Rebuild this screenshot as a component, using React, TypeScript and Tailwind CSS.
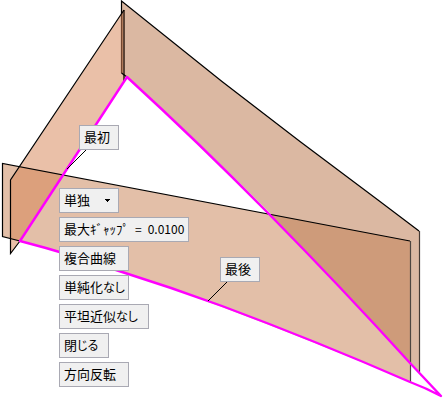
import type { ReactNode } from "react";

const FACE =
  "box-border block h-[25px] border border-[#a9a9b3] bg-[#f0f0f0] px-1 text-left text-[13px] text-black whitespace-nowrap";

const OPTIONS = ["単独", "連結", "正接連続"];

function Tag({ width, children }: { width: string; children: ReactNode }) {
  return (
    <button type="button" className={`${FACE} pb-0.5 leading-[21px] ${width}`}>
      {children}
    </button>
  );
}

function Kana({ children }: { children: ReactNode }) {
  return <span className="text-[12px] [font-feature-settings:'palt']">{children}</span>;
}

function ModeSelect() {
  return (
    <div className="relative w-[60px]">
      <select
        aria-label="曲線選択モード"
        defaultValue="単独"
        className={`${FACE} w-full appearance-none rounded-none pb-0.5 leading-[21px]`}
      >
        {OPTIONS.map((o) => (
          <option key={o}>{o}</option>
        ))}
      </select>
      <svg
        className="pointer-events-none absolute top-[11px] right-[9px]"
        width="5"
        height="3"
        viewBox="0 0 5 3"
        shapeRendering="crispEdges"
        aria-hidden="true"
      >
        <path d="M0 0h5v1h-1v1h-1v1h-1v-1h-1v-1h-1z" />
      </svg>
    </div>
  );
}

function Surfaces() {
  return (
    <svg className="block h-[401px] w-[444px]" viewBox="0 0 444 401" fill="none" aria-hidden="true">
      {/* surface fills */}
      <path
        d="M121.500 1.500L222 81.500L300 141.500L378 200L419.500 231V372Q269 204 127 77L121.500 73Z"
        fill="#dbb8a2"
      />
      <path d="M124 10L11 180V253.500L20 241L127 77L124 82Z" fill="#eac0a8" />
      <path d="M2.500 163.500L410.500 241V382Q220 303 119 271Q70 254 20 241L2.500 236.500Z" fill="#e3bfa8" />

      {/* where two surfaces overlap */}
      <path d="M11 180L20 166.500L64 175L20 241L11 239Z" fill="#dca07c" />
      <path d="M269 214L410.500 241V363Q338 284 269 214Z" fill="#ce9b7a" />
      <path d="M121.500 14L124.500 10V75.500L121.500 73Z" fill="#b57f5f" />

      {/* surface edges */}
      <g stroke="#000" strokeWidth="1.2">
        <path d="M121.500 14V1L222 81.500L300 141.500L378 200L419 231" />
        <path d="M419.500 231V372" stroke="#443a34" />
        <path d="M121.500 14V73" stroke="#73462f" />
        <path d="M124 10V82" stroke="#5c4436" strokeWidth="2" />
        <path d="M121.500 73L127 77" />
        <path d="M124 10L10.500 180V253.500L20 241" />
        <path d="M20 241L2.500 236.500V163.500L410 241" />
        <path d="M410.500 241V382" stroke="#4d4540" />
      </g>

      {/* selected curves */}
      <path
        d="M20 241L127 77Q198 142 269 214T410 363L441 396Q426 388 410 382Q316 341 222 306Q170 287 119 271Q70 254 20 241Z"
        stroke="#f0f"
        strokeWidth="2.400"
        strokeLinejoin="round"
      />

      {/* leader lines */}
      <path d="M87 149L67 169M228 281L208 301" stroke="#000" />
    </svg>
  );
}

export default function App() {
  return (
    <main className="relative min-h-screen overflow-hidden bg-white font-['Noto_Sans_CJK_JP',sans-serif]">
      <Surfaces />
      <div className="absolute top-[125px] left-[79px]">
        <Tag width="w-[40px]">最初</Tag>
      </div>
      <div className="absolute top-[257px] left-[220px]">
        <Tag width="w-[40px]">最後</Tag>
      </div>
      <div className="absolute top-[188px] left-[59px] flex flex-col gap-1">
        <ModeSelect />
        <Tag width="w-[130px]">
          <span className="flex gap-1.5">
            <span>最大ｷﾞｬｯﾌﾟ</span>
            <span className="text-[12px]">=</span>
            <span className="text-[12px]">0.0100</span>
          </span>
        </Tag>
        <Tag width="w-[70px]">複合曲線</Tag>
        <Tag width="w-[70px]">
          単純化<Kana>なし</Kana>
        </Tag>
        <Tag width="w-[90px]">
          平坦近似<Kana>なし</Kana>
        </Tag>
        <Tag width="w-[50px]">
          閉<Kana>じる</Kana>
        </Tag>
        <Tag width="w-[70px]">方向反転</Tag>
      </div>
    </main>
  );
}
